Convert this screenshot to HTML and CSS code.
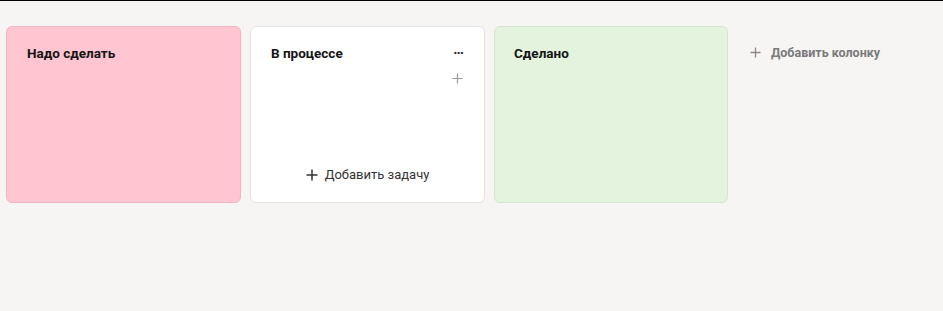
FILE: index.html
```html
<!DOCTYPE html>
<html lang="ru">
<head>
    <meta charset="UTF-8">
    <meta name="viewport" content="width=device-width, initial-scale=1.0">
    <title>Доска</title>
    <link rel="stylesheet" href="styles.css">
</head>
<body>
    <div class="board">
        <div class="column column-todo">
            <div class="column-header">
                <h3 class="column-title">Надо сделать</h3>
            </div>
        </div>

        <div class="column column-progress">
            <div class="column-header">
                <h3 class="column-title">В процессе</h3>
                <button class="icon-btn menu-btn">&middot;&middot;&middot;</button>
            </div>
            <div class="column-tools">
                <button class="icon-btn small-add">
                    <svg width="11" height="11" viewBox="0 0 11 11"><path d="M5.5 0.5v10M0.5 5.5h10" stroke="#999" stroke-width="1.2"/></svg>
                </button>
            </div>
            <button class="add-task">
                <svg width="12" height="12" viewBox="0 0 12 12"><path d="M6 0.5v11M0.5 6h11" stroke="#333" stroke-width="1.5"/></svg>
                Добавить задачу
            </button>
        </div>

        <div class="column column-done">
            <div class="column-header">
                <h3 class="column-title">Сделано</h3>
            </div>
        </div>

        <button class="add-column">
            <svg width="11" height="11" viewBox="0 0 11 11"><path d="M5.5 0.5v10M0.5 5.5h10" stroke="#888" stroke-width="1.3"/></svg>
            Добавить колонку
        </button>
    </div>
</body>
</html>
```

FILE: styles.css
```css
/* Reset default styles */
* {
  margin: 0;
  padding: 0;
  box-sizing: border-box;
}

body {
  font-family: Roboto, "Liberation Sans", sans-serif;
  background-color: #f6f5f3;
  color: #111;
  border-top: 1px solid #000;
  height: 100vh;
}

button {
  border: none;
  background: none;
  font-family: inherit;
  cursor: pointer;
}

.board {
  display: flex;
  align-items: flex-start;
  gap: 9px;
  padding: 25px 6px;
}

.column {
  width: 235px;
  height: 177px;
  border-radius: 6px;
  border: 1px solid #e4e3e1;
  background-color: #fff;
  display: flex;
  flex-direction: column;
  padding: 18px 20px 0 20px;
}

.column-done {
  width: 234px;
  padding-left: 19px;
  background-color: #e4f3de;
  border-color: #d2e6cb;
}

.column-todo {
  background-color: #ffc5d1;
  border-color: #f1b4c1;
}

.column-header {
  display: flex;
  justify-content: space-between;
  align-items: center;
  height: 16px;
}

.column-title {
  font-size: 13.5px;
  font-weight: 700;
  color: #151515;
}

.menu-btn {
  font-size: 14px;
  font-weight: 700;
  color: #222;
  letter-spacing: -1px;
  line-height: 10px;
  margin-right: 1px;
}

.column-tools {
  display: flex;
  justify-content: flex-end;
  margin-top: 12px;
}

.small-add {
  display: flex;
  margin-right: 1px;
}

.add-task {
  display: flex;
  align-items: center;
  justify-content: center;
  gap: 7px;
  font-size: 13px;
  color: #333;
  margin-top: 83px;
}

.add-column {
  display: flex;
  align-items: center;
  gap: 10px;
  font-size: 12.5px;
  font-weight: 700;
  color: #7a7a7a;
  margin: 19px 0 0 13px;
}
```
